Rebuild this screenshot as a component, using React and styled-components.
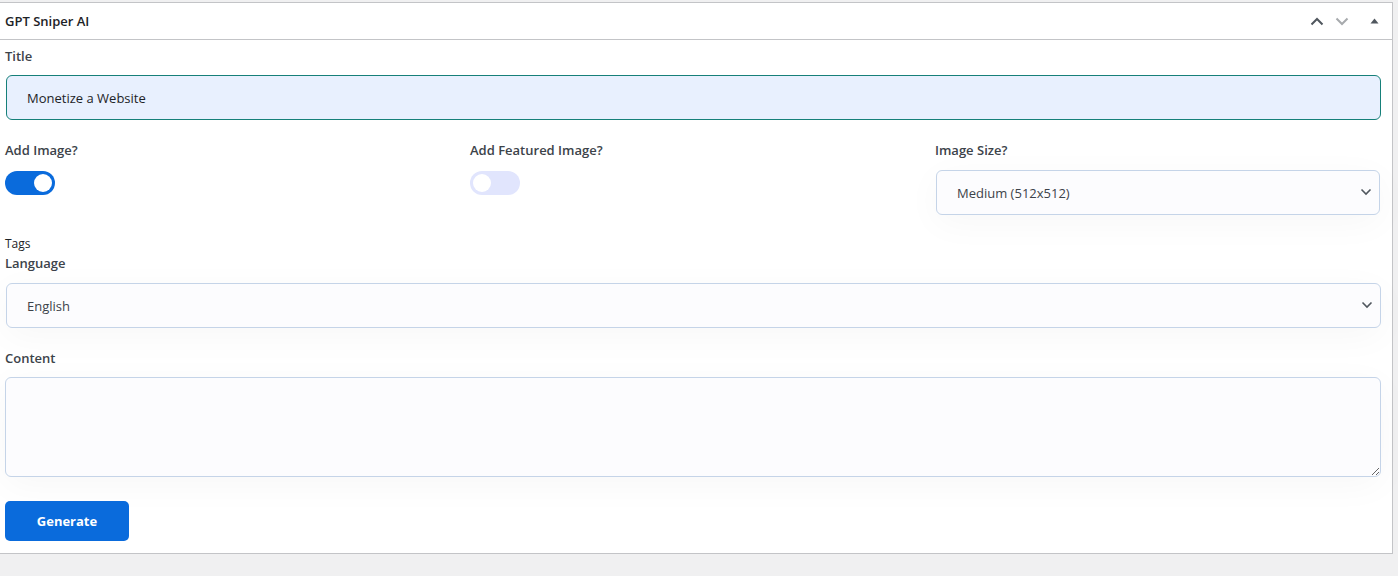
import React from "react";
import styled, { createGlobalStyle } from "styled-components";

const GlobalStyle = createGlobalStyle`
  body {
    margin: 0;
    background: #f0f0f1;
    font-family: "Open Sans", "Noto Sans", sans-serif;
    color: #1d2327;
  }
`;

const Panel = styled.div`
  margin: 2px 0 0 -1px;
  width: 1392px;
  border: 1px solid #c3c4c7;
  background: #fff;
`;

const PanelHeader = styled.div`
  height: 36px;
  display: flex;
  align-items: center;
  justify-content: space-between;
  padding: 0 8px 0 5px;
  border-bottom: 1px solid #c3c4c7;
`;

const PanelTitle = styled.h2`
  margin: 0;
  font-size: 13px;
  font-weight: 600;
  color: #1d2327;
`;

const HeaderActions = styled.div`
  display: flex;
  align-items: center;
  gap: 11px;
`;

const IconButton = styled.span`
  display: flex;
  width: ${(p) => p.$w || 14}px;
  margin-left: ${(p) => p.$gap || 0}px;
  justify-content: center;
  color: ${(p) => (p.$muted ? "#a7aaad" : "#50575e")};
`;

const PanelBody = styled.div`
  display: flex;
  flex-direction: column;
  padding: 6px 11px 12px 5px;
`;

const Label = styled.label`
  display: block;
  font-size: ${(p) => (p.$small ? 12 : 13)}px;
  line-height: ${(p) => (p.$small ? 16 : 20)}px;
  font-weight: ${(p) => (p.$small ? 400 : 600)};
  color: ${(p) => (p.$small ? "#1d2327" : "#3c434a")};
  margin-bottom: ${(p) => (p.$mb !== undefined ? p.$mb : 9)}px;
`;

const Field = styled.div`
  display: flex;
  flex-direction: column;
  align-items: flex-start;
  margin-top: ${(p) => p.$top || 0}px;
`;

const TextInput = styled.input`
  box-sizing: border-box;
  display: block;
  width: 1375px;
  height: 45px;
  margin-left: 1px;
  padding: 0 20px;
  border-radius: 6px;
  font-family: inherit;
  font-size: 13px;
  color: #1d2327;
  background: ${(p) => (p.$filled ? "#e8f0fe" : "#fcfcfe")};
  border: 1px solid ${(p) => (p.$filled ? "#168079" : "#c5d4e8")};
  outline: none;
`;

const Row = styled.div`
  display: grid;
  grid-template-columns: 446px 446px 1fr;
  column-gap: 19px;
  margin-top: 20px;
`;

const Toggle = styled.span`
  position: relative;
  display: block;
  width: 50px;
  height: 24px;
  margin-top: 2px;
  border-radius: 12px;
  background: ${(p) => (p.$on ? "#0a6bdc" : "#e1e5fd")};
  &::after {
    content: "";
    position: absolute;
    top: 3px;
    left: ${(p) => (p.$on ? "29px" : "3px")};
    width: 18px;
    height: 18px;
    border-radius: 50%;
    background: #fff;
  }
`;

const SelectWrap = styled.div`
  position: relative;
  align-self: stretch;
  width: ${(p) => p.$w || "auto"};
  margin: ${(p) => p.$top || 0}px 1px 0 1px;
  border-radius: 6px;
  box-shadow: 0 8px 36px rgba(0, 0, 0, 0.035);
`;

const Select = styled.select`
  box-sizing: border-box;
  display: block;
  width: 100%;
  height: 45px;
  padding: 0 40px 0 20px;
  border: 1px solid #c5d4e8;
  border-radius: 6px;
  background: #fcfcfe;
  font-family: inherit;
  font-size: 13px;
  color: #3c434a;
  appearance: none;
  outline: none;
`;

const Caret = styled.svg`
  position: absolute;
  right: 8px;
  top: 18px;
  pointer-events: none;
`;

const TextArea = styled.textarea`
  box-sizing: border-box;
  display: block;
  width: 1376px;
  height: 100px;
  border: 1px solid #c5d4e8;
  border-radius: 6px;
  background: #fcfcfe;
  box-shadow: 0 8px 36px rgba(0, 0, 0, 0.035);
  font-family: inherit;
  font-size: 13px;
  outline: none;
`;

const Button = styled.button`
  display: block;
  margin-top: 24px;
  width: 124px;
  height: 40px;
  border: none;
  border-radius: 5px;
  background: #0a6bdc;
  color: #fff;
  font-family: inherit;
  font-size: 13px;
  font-weight: 700;
  cursor: pointer;
`;

function SelectField({ value, options, width, top }) {
  return (
    <SelectWrap $w={width} $top={top}>
      <Select defaultValue={value}>
        {options.map((o) => (
          <option key={o}>{o}</option>
        ))}
      </Select>
      <Caret width="12" height="8" viewBox="0 0 12 8">
        <path d="M1.5 1.5 6 6l4.5-4.5" fill="none" stroke="#50575e" strokeWidth="1.6" />
      </Caret>
    </SelectWrap>
  );
}

export default function App() {
  return (
    <>
      <GlobalStyle />
      <Panel>
        <PanelHeader>
          <PanelTitle>GPT Sniper AI</PanelTitle>
          <HeaderActions>
            <IconButton>
              <svg width="14" height="9" viewBox="0 0 14 9">
                <path d="M1.5 7.5 7 2l5.5 5.5" fill="none" stroke="currentColor" strokeWidth="2" />
              </svg>
            </IconButton>
            <IconButton $muted>
              <svg width="14" height="9" viewBox="0 0 14 9">
                <path d="M1.5 1.5 7 7l5.5-5.5" fill="none" stroke="currentColor" strokeWidth="2" />
              </svg>
            </IconButton>
            <IconButton $w={20} $gap={4}>
              <svg width="9" height="6" viewBox="0 0 9 6">
                <path d="M0.5 5.5 4.5 0.5l4 5z" fill="currentColor" />
              </svg>
            </IconButton>
          </HeaderActions>
        </PanelHeader>
        <PanelBody>
          <Field>
            <Label>Title</Label>
            <TextInput $filled defaultValue="Monetize a Website" />
          </Field>

          <Row>
            <Field>
              <Label>Add Image?</Label>
              <Toggle $on />
            </Field>
            <Field>
              <Label>Add Featured Image?</Label>
              <Toggle />
            </Field>
            <Field>
              <Label>Image Size?</Label>
              <SelectField top={1} value="Medium (512x512)" options={["Small (256x256)", "Medium (512x512)", "Large (1024x1024)"]} />
            </Field>
          </Row>

          <Field $top={21}>
            <Label $small $mb={1}>Tags</Label>
            <Label $mb={10}>Language</Label>
            <SelectField value="English" options={["English", "Spanish", "French", "German"]} width="1375px" />
          </Field>

          <Field $top={20}>
            <Label>Content</Label>
            <TextArea />
          </Field>

          <Field>
            <Button>Generate</Button>
          </Field>
        </PanelBody>
      </Panel>
    </>
  );
}
